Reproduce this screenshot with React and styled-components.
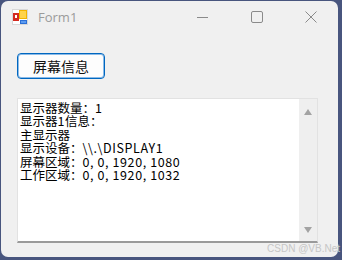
import React from "react";
import styled, { createGlobalStyle } from "styled-components";

const GlobalStyle = createGlobalStyle`
  html, body {
    margin: 0;
    padding: 0;
    background: #48557e;
    width: 342px;
    height: 260px;
    overflow: hidden;
  }
`;

const Window = styled.div`
  position: relative;
  margin: 1px 0 0 1px;
  width: 337px;
  height: 256px;
  border-radius: 7px;
  background: #f0f0f0;
  display: flex;
  flex-direction: column;
  font-family: "Noto Sans CJK SC", sans-serif;
`;

const TitleBar = styled.div`
  height: 32px;
  display: flex;
  align-items: center;
  padding-left: 11px;
  box-sizing: border-box;
`;

const Title = styled.span`
  margin-left: 10px;
  font-family: "Open Sans", "Noto Sans", sans-serif;
  font-size: 13px;
  color: #9b9b9b;
`;

const Controls = styled.div`
  margin-left: auto;
  display: flex;
  height: 100%;
`;

const CtrlButton = styled.div`
  width: 54px;
  height: 100%;
  display: flex;
  align-items: center;
  justify-content: center;
`;

const Body = styled.div`
  padding: 20px 0 0 16px;
  display: flex;
  flex-direction: column;
`;

const Button = styled.button`
  width: 88px;
  height: 26px;
  padding: 0;
  border: 1px solid #0067c0;
  box-shadow: inset 0 0 0 1px #8bbbe8;
  border-radius: 4px;
  background: #fdfdfd;
  font-family: "Noto Sans CJK SC", sans-serif;
  font-size: 14px;
  color: #111;
  line-height: 24px;
`;

const TextBox = styled.div`
  margin-top: 19px;
  width: 301px;
  height: 145px;
  box-sizing: border-box;
  border: 1px solid #e2e2e2;
  border-bottom: 2px solid #9a9a9a;
  background: #fff;
  display: flex;
`;

const Content = styled.div`
  flex: 1;
  padding: 2px 0 0 2px;
  font-family: "Noto Sans CJK SC", sans-serif;
  font-size: 12.5px;
  line-height: 13.4px;
  color: #000;
  white-space: pre;
`;

const Line = styled.div`
  height: 13.4px;
  display: flex;
`;

const Part = styled.span`
  display: inline-block;
  height: 13.4px;
  line-height: 13.4px;
  letter-spacing: ${(p) => (p.latin ? "0.6px" : "0")};
`;

const ScrollBar = styled.div`
  width: 18px;
  background: #efefef;
  display: flex;
  flex-direction: column;
  justify-content: space-between;
  align-items: center;
  padding: 10px 0 8px;
`;

const Arrow = styled.div`
  width: 0;
  height: 0;
  border-left: 4px solid transparent;
  border-right: 4px solid transparent;
  ${(p) =>
    p.down
      ? "border-top: 6px solid #a3a3a3;"
      : "border-bottom: 6px solid #a3a3a3;"}
`;

const Watermark = styled.span`
  position: absolute;
  right: -2px;
  bottom: 3px;
  font-family: "Liberation Sans", sans-serif;
  font-size: 10px;
  color: #c6c6c6;
`;

function AppIcon() {
  return (
    <svg width="16" height="16" viewBox="0 0 16 16">
      <rect x="0.5" y="0.5" width="15" height="15" fill="#fff" stroke="#d8d8d8" />
      <rect x="1" y="4" width="6" height="8" fill="#d42a1f" />
      <rect x="3" y="6" width="2" height="3" fill="#fff" />
      <rect x="7" y="1" width="8" height="9" fill="#f2b400" />
      <rect x="8" y="2" width="6" height="7" fill="#ffd34a" />
      <rect x="8" y="11" width="7" height="4" fill="#2b6fd6" />
      <rect x="9" y="12" width="5" height="2" fill="#5c9bf0" />
    </svg>
  );
}

const lines = [
  ["显示器数量：", "1"],
  ["显示器", "1", "信息："],
  ["主显示器"],
  ["显示设备：", "\\\\.\\DISPLAY1"],
  ["屏幕区域：", "0, 0, 1920, 1080"],
  ["工作区域：", "0, 0, 1920, 1032"],
];

export default function App() {
  return (
    <>
      <GlobalStyle />
      <Window>
        <TitleBar>
          <AppIcon />
          <Title>Form1</Title>
          <Controls>
            <CtrlButton>
              <svg width="12" height="12" viewBox="0 0 12 12">
                <line x1="0" y1="6.5" x2="11" y2="6.5" stroke="#8a8a8a" strokeWidth="1" />
              </svg>
            </CtrlButton>
            <CtrlButton>
              <svg width="12" height="12" viewBox="0 0 12 12">
                <rect x="0.5" y="0.5" width="11" height="11" rx="1.5" fill="none" stroke="#8a8a8a" />
              </svg>
            </CtrlButton>
            <CtrlButton>
              <svg width="12" height="12" viewBox="0 0 12 12">
                <path d="M0.5 0.5 L11.5 11.5 M11.5 0.5 L0.5 11.5" stroke="#8a8a8a" strokeWidth="1" />
              </svg>
            </CtrlButton>
          </Controls>
        </TitleBar>
        <Body>
          <Button>屏幕信息</Button>
          <TextBox>
            <Content>
              {lines.map((parts, i) => (
                <Line key={i}>
                  {parts.map((p, j) => (
                    <Part key={j} latin={/^[\x00-\x7f]+$/.test(p)}>
                      {p}
                    </Part>
                  ))}
                </Line>
              ))}
            </Content>
            <ScrollBar>
              <Arrow />
              <Arrow down />
            </ScrollBar>
          </TextBox>
        </Body>
        <Watermark>CSDN @VB.Net</Watermark>
      </Window>
    </>
  );
}
